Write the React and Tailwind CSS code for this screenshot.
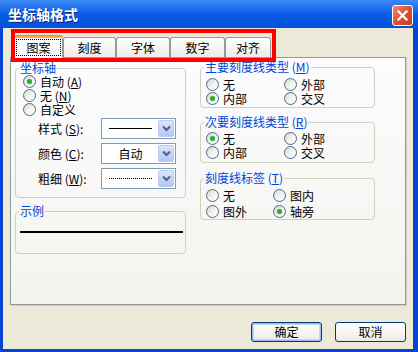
import React from "react";

function Radio({ checked, label, k, h = "h-[14px]" }) {
  return (
    <div className={`flex items-center ${h}`}>
      <span className="w-[13px] h-[13px] shrink-0 rounded-full border border-[#4f6a86] bg-gradient-to-br from-[#d6d6cf] via-[#f2f2ee] to-white flex items-center justify-center">
        {checked && <span className="w-[5px] h-[5px] rounded-full bg-[#2fae2f] shadow-[0_0_1px_#6fd26f]" />}
      </span>
      <span className="ml-[4px] whitespace-nowrap leading-[13px]">
        {label}
        {k && (
          <>
            {" "}(<u>{k}</u>)
          </>
        )}
      </span>
    </div>
  );
}

function Group({ legend, k, children, className = "" }) {
  return (
    <fieldset className={`border border-[#d0d0bf] rounded-[4px] p-0 m-0 min-w-0 ${className}`}>
      <legend className="ml-[3px] px-[1px] leading-[12px] text-[#0046d5] whitespace-nowrap">
        {legend}
        {k && (
          <>
            {" "}(<u>{k}</u>)
          </>
        )}
      </legend>
      {children}
    </fieldset>
  );
}

function Combo({ children }) {
  return (
    <div className="w-[75px] h-[21px] border border-[#7f9db9] bg-white flex items-stretch p-[1px]">
      <div className="flex-1 flex items-center justify-center">{children}</div>
      <div className="w-[16px] rounded-[2px] border border-[#b8c9f2] bg-gradient-to-b from-[#dbe5fc] to-[#b3c6f4] flex items-center justify-center">
        <svg width="9" height="7" viewBox="0 0 9 7">
          <path d="M1 1.5 L4.5 5 L8 1.5" fill="none" stroke="#4d6185" strokeWidth="2" />
        </svg>
      </div>
    </div>
  );
}

function Tab({ label, selected, w }) {
  if (selected) {
    return (
      <div
        className={`${w} h-[23px] relative border-x border-[#919b9c] bg-[#fcfcfe] flex items-center justify-center rounded-t-[3px]`}
      >
        <div className="absolute left-[-1px] right-[-1px] top-0 h-[3px] rounded-t-[3px] bg-gradient-to-b from-[#e68b2c] to-[#ffc73c]" />
        <span className="border border-dotted border-black px-[9px] py-[1px] leading-[13px] mt-[2px]">{label}</span>
      </div>
    );
  }
  return (
    <div
      className={`${w} h-[20px] mb-[1px] border-t border-x border-[#919b9c] rounded-t-[3px] bg-gradient-to-b from-white to-[#ecebe6] flex items-center justify-center`}
    >
      {label}
    </div>
  );
}

export default function App() {
  return (
    <div className="w-[418px] h-[352px] flex flex-col bg-[#0843d4] font-['Noto_Sans_CJK_SC','Noto_Sans',sans-serif] text-[12px] leading-[14px] text-black overflow-hidden">
      {/* title bar */}
      <div className="h-[28px] shrink-0 flex items-center justify-between pl-[8px] pr-[5px] bg-gradient-to-b from-[#3b8af5] via-[#0a5ce6] to-[#0350dc]">
        <span className="text-white font-bold text-[14px] [text-shadow:1px_1px_0_#0a2a80]">坐标轴格式</span>
        <div className="w-[21px] h-[21px] mt-[2px] rounded-[3px] border border-white bg-gradient-to-br from-[#f08a6c] via-[#e0512d] to-[#c23d1a] flex items-center justify-center">
          <svg width="11" height="11" viewBox="0 0 11 11">
            <path d="M1.5 1.5 L9.5 9.5 M9.5 1.5 L1.5 9.5" stroke="white" strokeWidth="2.2" strokeLinecap="square" />
          </svg>
        </div>
      </div>

      {/* body */}
      <div className="relative flex-1 ml-[3px] mr-[5px] mb-[3px] bg-[#ece9d8] flex flex-col">
        {/* tabs */}
        <div className="relative z-10 mt-[7px] pl-[11px] flex items-end h-[23px] -mb-[1px]">
          <Tab label="图案" selected w="w-[49px]" />
          <Tab label="刻度" w="w-[53px]" />
          <Tab label="字体" w="w-[54px]" />
          <Tab label="数字" w="w-[55px]" />
          <Tab label="对齐" w="w-[46px]" />
        </div>

        {/* panel */}
        <div className="mx-[7px] h-[248px] border border-[#919b9c] bg-gradient-to-b from-[#fcfcfe] to-[#f4f3ee] shadow-[1px_1px_0_#d0cebf] pt-[4px] pl-[4px] flex gap-[14px]">
          {/* left column */}
          <div className="w-[171px] flex flex-col">
            <Group legend="坐标轴">
              <div className="pl-[7px] pb-[8px]">
                <Radio checked label="自动" k="A" />
                <Radio label="无" k="N" />
                <Radio label="自定义" />
                <div className="mt-[2px] flex flex-col gap-[4px] pl-[15px]">
                  <div className="flex items-center">
                    <span className="w-[63px] whitespace-nowrap">样式 (<u>S</u>):</span>
                    <Combo>
                      <div className="w-[43px] h-[1px] bg-black" />
                    </Combo>
                  </div>
                  <div className="flex items-center">
                    <span className="w-[63px] whitespace-nowrap">颜色 (<u>C</u>):</span>
                    <Combo>
                      <span>自动</span>
                    </Combo>
                  </div>
                  <div className="flex items-center">
                    <span className="w-[63px] whitespace-nowrap">粗细 (<u>W</u>):</span>
                    <Combo>
                      <div className="w-[43px] h-0 border-t border-dotted border-black" />
                    </Combo>
                  </div>
                </div>
              </div>
            </Group>
            <Group legend="示例" className="mt-[7px]">
              <div className="pl-[4px] pr-[2px] pt-[14px] pb-[20px]">
                <div className="h-[1.5px] bg-black" />
              </div>
            </Group>
          </div>

          {/* right column */}
          <div className="w-[175px] flex flex-col -mt-[1px]">
            <Group legend="主要刻度线类型" k="M">
              <div className="pl-[5px] pt-[4px] pb-[2px] grid grid-cols-[78px_1fr]">
                <Radio label="无" />
                <Radio label="外部" />
                <Radio checked label="内部" />
                <Radio label="交叉" />
              </div>
            </Group>
            <Group legend="次要刻度线类型" k="R" className="mt-[8px]">
              <div className="pl-[5px] pt-[3px] pb-[3px] grid grid-cols-[78px_1fr]">
                <Radio checked label="无" />
                <Radio label="外部" />
                <Radio label="内部" />
                <Radio label="交叉" />
              </div>
            </Group>
            <Group legend="刻度线标签" k="T" className="mt-[9px]">
              <div className="pl-[5px] pt-[3px] pb-[0px] grid grid-cols-[67px_1fr]">
                <Radio label="无" h="h-[16px]" />
                <Radio label="图内" h="h-[16px]" />
                <Radio label="图外" h="h-[16px]" />
                <Radio checked label="轴旁" h="h-[16px]" />
              </div>
            </Group>
          </div>
        </div>

        {/* buttons */}
        <div className="mt-[17px] pr-[7px] flex justify-end gap-[13px]">
          <button className="w-[71px] h-[20px] rounded-[3px] border border-[#003c74] bg-gradient-to-b from-white to-[#ecebe6] shadow-[inset_0_0_0_1px_#9ebbf0,inset_0_0_0_2px_#c4d6f7] leading-[14px]">
            确定
          </button>
          <button className="w-[71px] h-[20px] rounded-[3px] border border-[#003c74] bg-gradient-to-b from-white to-[#ecebe6] leading-[14px]">
            取消
          </button>
        </div>

        {/* red highlight overlay */}
        <div className="absolute left-[8px] top-[1px] w-[265px] h-[33px] border-[4px] border-[#ff0000] pointer-events-none z-20" />
      </div>
    </div>
  );
}
